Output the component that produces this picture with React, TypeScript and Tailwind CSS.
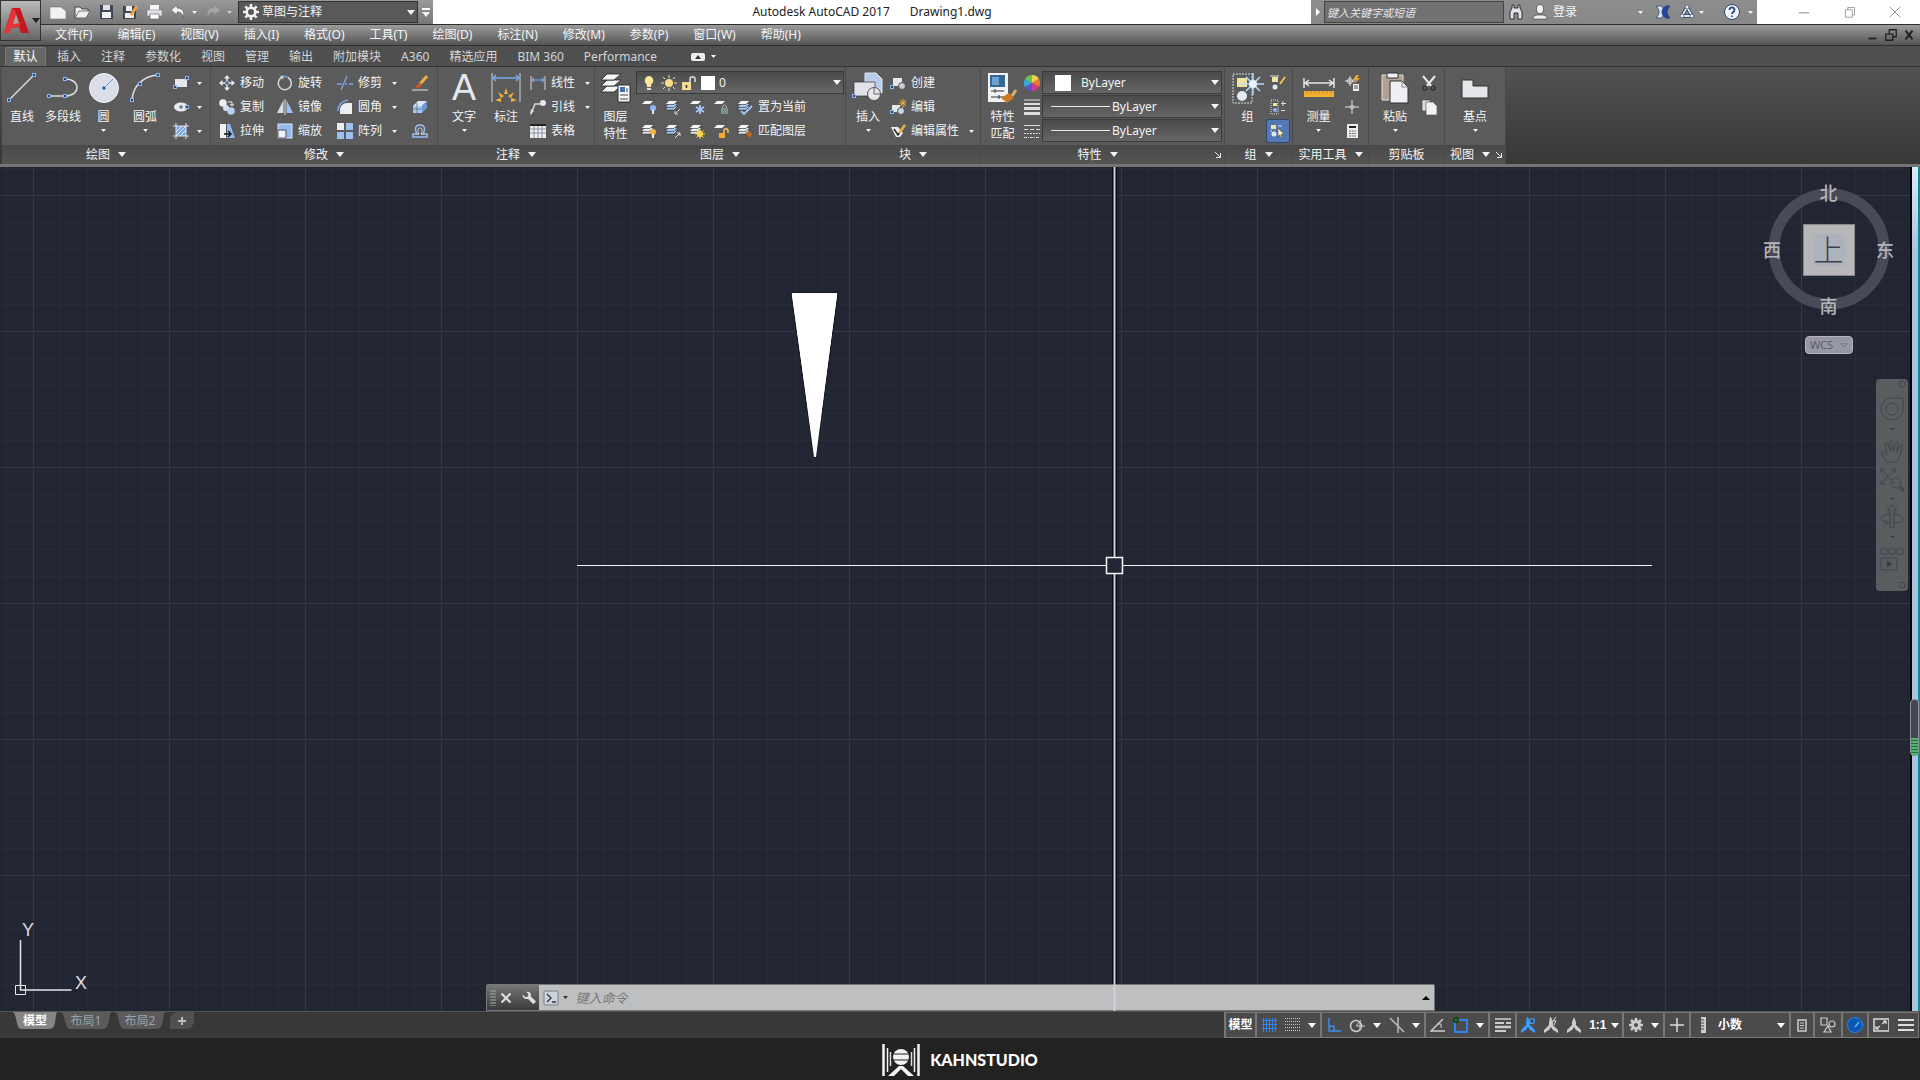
import { type ReactNode } from "react"

type IconProps = { children: ReactNode; size?: string; box?: string }

const Icon = ({ children, size = "size-4", box = "0 0 16 16" }: IconProps) => (
    <svg className={`${size} shrink-0`} viewBox={box} fill="none" aria-hidden="true">
        {children}
    </svg>
)

const Caret = ({ big = false }: { big?: boolean }) => (
    <svg className={big ? "w-2 h-[5px] shrink-0" : "w-[5px] h-[3px] shrink-0"} viewBox="0 0 8 5" preserveAspectRatio="none" aria-hidden="true">
        <path d="M0 0h8L4 5z" fill="currentColor" />
    </svg>
)

const Node = ({ x, y }: { x: number; y: number }) => (
    <rect x={x - 1.5} y={y - 1.5} width="3" height="3" fill="#33425f" stroke="#8ab6f5" />
)

// stack of sheets shared by the layer icons
const Sheets = ({ n = 3, blue = false }: { n?: number; blue?: boolean }) => (
    <g fill={blue ? "#a9c8f2" : "#e9ebf0"} stroke="#2c2c2c" strokeWidth=".6">
        {n > 2 && <path d="M4 7h9l-4 4H0z" />}
        {n > 1 && <path d="M4 4.500h9l-4 4H0z" />}
        <path d="M4 1.500h9l-4 4H0z" fill="#f4f5f7" />
    </g>
)

const icons: Record<string, ReactNode> = {
    line: <><path d="M3 28 28 3" stroke="#ddd" strokeWidth="1.500" /><Node x={3} y={28} /><Node x={28} y={3} /></>,
    polyline: <><path d="M2 24h16c16 0 16-17 0-17" stroke="#ddd" strokeWidth="1.500" /><Node x={2} y={24} /><Node x={18} y={24} /><Node x={18} y={7} /></>,
    circle: <><circle cx="16" cy="16" r="14.500" fill="#d9dde8" stroke="#f5f5f8" /><path d="m16 16 9-9" stroke="#6f9fe8" /><Node x={16} y={16} /></>,
    arc: <><path d="M3 28C4 14 14 4 29 3" stroke="#ddd" strokeWidth="1.500" /><Node x={3} y={28} /><Node x={11} y={12} /><Node x={29} y={3} /></>,
    rect: <><rect x="2" y="4" width="12" height="8" fill="#e6e8ee" /><Node x={2} y={12} /><Node x={14} y={3} /></>,
    ellipse: <><ellipse cx="8" cy="8" rx="7" ry="4.500" fill="#e6e8ee" /><path d="M8 6v4M6 8h4" stroke="#556" /><Node x={14} y={8} /></>,
    hatch: <><rect x="3" y="3" width="10" height="10" fill="#7da8e8" /><path d="M3 0v16M13 0v16M0 3h16M0 13h16" stroke="#dfe3ea" /><path d="m3 9 6-6M3 13 13 3M7 13l6-6" stroke="#dfe9fa" /></>,
    move: <><path d="m8 0 3 3.500H5zM8 16l3-3.500H5zM0 8l3.500-3v6zM16 8l-3.500-3v6z" fill="#e6e8ee" /><path d="M8 3v3M8 10v3M3 8h3M10 8h3" stroke="#e6e8ee" strokeWidth="1.500" /><circle cx="8" cy="8" r="2" stroke="#9cc0f5" /></>,
    rotate: <><path d="M11 2.500A6.500 6.500 0 1 1 5 2.300" stroke="#d5d8de" strokeWidth="1.500" /><path d="m3 1 4-.5-1 4z" fill="#d5d8de" /><path d="M6 2C7.500 1 9.500 1.500 11 2.500" stroke="#6f9fe8" strokeWidth="1.500" /></>,
    trim: <><path d="M0 9h5M8 9h2M12 9h4" stroke="#7ba7ec" strokeWidth="1.500" /><path d="m4 15 6-14" stroke="#7ba7ec" strokeWidth="1.300" /></>,
    brush: <><path d="m15 1-7 8" stroke="#f0b03c" strokeWidth="3" /><path d="M9 8c1 3-2 6-7 6 2-2 3-6 7-6z" fill="#c8581e" /><path d="M0 15h16" stroke="#e5e5e5" /></>,
    copy: <><circle cx="4" cy="4" r="3.800" fill="#eceef2" /><circle cx="7" cy="9" r="3" fill="#dbe2ee" /><circle cx="12" cy="12" r="3.800" fill="#b6d0f4" /><path d="M9 3h4v4m-2-2 2 2 2-2" stroke="#eee" /></>,
    mirror: <><path d="M6.500 1v13H0z" fill="#d9dce3" /><path d="M9.500 1v13H16z" fill="#9fc1ee" /><path d="M8 0v16" stroke="#ddd" /></>,
    fillet: <><path d="M3 15V11c0-4 3-7 7-7h5v11z" fill="#eceef2" /><path d="M1 12C1 6 5 2 11 1" stroke="#7ba7ec" strokeWidth="1.500" /></>,
    box3: <><path d="M1 7h9v7H1z" fill="#a8c7f0" /><path d="m1 7 5-5h9l-5 5z" fill="#dbe8fa" /><path d="m10 7 5-5v7l-5 5z" fill="#6f98d2" /><path d="M5 4v10M1 10h9" stroke="#5c6f8d" strokeWidth=".8" /></>,
    stretch: <><path d="M1 1h6v14H1z" fill="#f0f1f4" /><path d="M8 1h3l5 14H8z" fill="#8eb6ee" /><path d="M5 11h7m-3-3 3 3-3 3" stroke="#111" strokeWidth="1.400" /></>,
    scale: <><rect x="1" y="1" width="14" height="14" fill="#93b8ec" stroke="#dce7f8" /><rect x="1" y="7" width="8" height="8" fill="#f0f1f4" stroke="#556" /></>,
    array: <><path d="M0 0h7v7H0z" fill="#eceef2" /><path d="M9 0h7v7H9zM0 9h7v7H0zM9 9h7v7H9z" fill="#9cc0f2" /></>,
    offset: <><path d="M1 14h14v-3h-4c2-3 3-9-3-9S3 8 5 11H1z" stroke="#9cc0f5" strokeWidth="1.500" /><path d="M5 11h2C5 7 6 5 8 5s3 2 1 6h2" stroke="#d7dde8" /></>,
    dim: <><path d="M2 1v29M30 1v29" stroke="#d5d5d5" /><path d="M3 6h26M6 3 3 6l3 3M26 3l3 3-3 3" stroke="#78a9f0" strokeWidth="1.500" /><g fill="#f2b33c"><path d="m16 16 2 6h-4zM8 20l6 4-3 2zM24 20l-6 4 3 2zM5 28l6-2v4zM27 28l-6-2v4z" /></g></>,
    linear: <><path d="M1 1v14M15 1v14" stroke="#d5d5d5" /><path d="M2 5h12M4 3 2 5l2 2M12 3l2 2-2 2" stroke="#78a9f0" strokeWidth="1.200" /></>,
    leader: <><path d="M1 15 5 5h6" stroke="#d9d9d9" strokeWidth="1.500" /><path d="m0 16 1-6 3 2z" fill="#ddd" /><circle cx="13" cy="4" r="3" fill="#e6e8ee" /></>,
    table: <><rect x="0" y="1" width="16" height="14" fill="#eceef2" /><path d="M0 2h16" stroke="#222" strokeWidth="2" /><path d="M0 6h16M0 10h16M4 3v12M8 3v12M12 3v12" stroke="#8a92a5" /></>,
    layerBig: <><g fill="#f4f5f7" stroke="#222" strokeWidth=".8"><path d="M7 14h14l-7 6H1z" /><path d="M7 8h14l-7 6H1z" /><path d="M7 2h14l-7 6H1z" /></g><rect x="18" y="13" width="12" height="17" fill="#f4f5f7" stroke="#333" /><path d="M20 15h5v5h-5z" fill="#3f6fae" /><path d="M20 23h8M20 27h8M27 16v4" stroke="#444" /></>,
    bulb: <><path d="M8 1a4.500 4.500 0 0 0-2.500 8L6 12h4l.5-3A4.500 4.500 0 0 0 8 1z" fill="#fde79a" /><path d="M6 14h4" stroke="#ddd" strokeWidth="2" /></>,
    sun: <><circle cx="8" cy="8" r="4" fill="#f7d98a" /><path d="M8 0v3M8 13v3M0 8h3M13 8h3M2 2l2 2M12 12l2 2M14 2l-2 2M2 14l2-2" stroke="#f0e3c0" /></>,
    unlock: <><path d="M1 7h9v8H1z" fill="#f3dd93" /><path d="M9 7V4c0-3 5-3 5 0v3" stroke="#ddd" strokeWidth="1.500" /><path d="M5.500 10v3" stroke="#333" strokeWidth="1.500" /></>,
    lay1: <><Sheets n={1} /><circle cx="12" cy="9" r="3" fill="#8fb8f5" /><path d="M12 11v4" stroke="#dce7f8" strokeWidth="2" /></>,
    lay2: <><Sheets blue /><path d="m15 10-5 5m0-3v3h3" stroke="#c9cdd6" /></>,
    lay3: <><Sheets n={1} /><path d="M11 6v9M7 8l8 5M15 8l-8 5" stroke="#a9c9fa" strokeWidth="1.800" /></>,
    lay4: <><Sheets n={1} /><path d="M8 9h7v6H8z" fill="#76938f" /><path d="M9.500 9c0-4 4-4 4 0" stroke="#b7c3c2" /></>,
    lay5: <><Sheets blue /><path d="m4 12 3 3 8-8" stroke="#9cc0f5" strokeWidth="2" /></>,
    lay6: <><Sheets /><circle cx="12" cy="9" r="3" fill="#f5b43c" /><path d="M12 11v4" stroke="#eee" strokeWidth="2" /></>,
    lay7: <><Sheets blue /><path d="m10 15 5-5m0 3v-3h-3" stroke="#e5e8ee" /></>,
    lay8: <><Sheets /><circle cx="11" cy="11" r="3" fill="#ffe04a" /><path d="M11 6v10M6 11h10M7.500 7.500l7 7M14.500 7.500l-7 7" stroke="#ffd447" /></>,
    lay9: <><Sheets n={1} /><path d="M6 10h6v5H6z" fill="#f2a92e" /><path d="M11 10V8c0-3 4-3 4 0v2" stroke="#f2c25a" strokeWidth="1.500" /></>,
    lay10: <><Sheets /><path d="m8 10 5 5 2-4-3-3z" fill="#c26a25" /></>,
    insert: <><path d="M13 1h11l6 6v14H13z" fill="#b9cdec" stroke="#dfe8f6" /><path d="M2 10h21v14H2z" fill="#e1e3e9" stroke="#333" strokeWidth=".7" /><circle cx="22" cy="22" r="6.500" fill="#e6e7ea" stroke="#555" /><path d="M22 16v6h6" stroke="#666" /><Node x={2} y={24} /></>,
    create: <><path d="M3 3h9v8H3z" fill="#e6e8ee" /><circle cx="12" cy="11" r="3.500" fill="#c9ccd3" stroke="#555" /><Node x={2} y={12} /></>,
    edit: <><path d="M2 6h8v7H2z" fill="#e6e8ee" /><circle cx="11" cy="12" r="3.500" fill="#c3d4ee" stroke="#555" /><path d="M13 0v9M9 4h7M10 1l6 6M16 1l-6 6" stroke="#f0b03c" /><Node x={2} y={13} /></>,
    attr: <><path d="M1 4h7l5 6-3 4H6z" fill="#eceef2" /><path d="m4 6 4 6 2-3" stroke="#222" strokeWidth="1.500" /><path d="m15 2-6 8" stroke="#f0b03c" strokeWidth="2.500" /></>,
    match: <><path d="M1 1h20v29H1z" fill="#f1f2f4" /><path d="M3 3h15v12H3z" fill="#356795" /><path d="M5 5h7v8H5z" fill="#6ca3d4" /><path d="M4 19h13M8 17v4M4 25h13M12 23v4" stroke="#333" /><path d="M29 18l-4 6" stroke="#d9b27a" strokeWidth="3" /><path d="m14 26 8-5 5 5-7 5z" fill="#c97a28" /></>,
    wheel: <><path d="M8 8V0a8 8 0 0 1 7 4z" fill="#f3d04b" /><path d="M8 8l7-4a8 8 0 0 1 0 8z" fill="#e8792f" /><path d="M8 8l7 4a8 8 0 0 1-7 4z" fill="#d1388a" /><path d="M8 8v8a8 8 0 0 1-7-4z" fill="#5b55c8" /><path d="M8 8l-7 4a8 8 0 0 1 0-8z" fill="#39a7d8" /><path d="M8 8 1 4a8 8 0 0 1 7-4z" fill="#6ac250" /></>,
    weights: <><path d="M0 1h16" stroke="#ddd" /><path d="M0 5h16" stroke="#ddd" strokeWidth="2" /><path d="M0 9.500h16M0 14.500h16" stroke="#ddd" strokeWidth="3" /></>,
    types: <><path d="M0 2.500h16" stroke="#ddd" /><path d="M0 6.500h16" stroke="#ddd" strokeDasharray="4 2" /><path d="M0 10.500h16" stroke="#ddd" strokeDasharray="2 1" /><path d="M0 14.500h16" stroke="#ddd" strokeDasharray="3 1 1 1" /></>,
    group: <><rect x="1" y="2" width="19" height="29" stroke="#ddd" strokeDasharray="2 1" /><path d="M5 6h10v9H5z" fill="#eee3a0" /><circle cx="10" cy="24" r="5" fill="#e3eaf3" /><path d="M21 1v22M10 12h22M14 5l14 14M28 5 14 19" stroke="#b5dcff" strokeWidth="1.500" /><circle cx="21" cy="12" r="4" fill="#e6f5ff" /></>,
    groupEdit: <><path d="M2 2h6v5H2z" fill="#eee3a0" /><path d="M0 1h9" stroke="#ddd" /><circle cx="5" cy="12" r="2.500" fill="#e3eaf3" /><path d="m15 2-5 7" stroke="#f0c050" strokeWidth="2" /></>,
    groupAdd: <><path d="M1 1h7v14H1z" stroke="#ddd" strokeDasharray="1 1" /><path d="M3 4h4v3H3z" fill="#eee3a0" /><circle cx="5" cy="11" r="2" fill="#8ab6f5" /><path d="M13 2v5M11 4.500h5M11 11.500h4" stroke="#ddd" /></>,
    groupSel: <><path d="M1 2h5v4H1z" fill="#eee3a0" /><circle cx="4" cy="11" r="2.500" fill="#dfe7f2" /><path d="M1 9V7M8 3h4" stroke="#dde" /><path d="m8 5 6 6-3 .5 1.500 3-1.500.5-1.300-3L8 14z" fill="#f5eeb8" stroke="#333" strokeWidth=".5" /></>,
    measure: <><path d="M1 6v10M31 6v10M2 11h28M6 8l-4 3 4 3M26 8l4 3-4 3" stroke="#e5e5e5" strokeWidth="1.500" /><path d="M1 19h30v6H1z" fill="#f2b02e" /><path d="M4 19v3M8 19v3M12 19v3M16 19v3M20 19v3M24 19v3M28 19v3" stroke="#c08a24" /></>,
    quickSel: <><path d="M6 1v10M1 6h10" stroke="#e5e5e5" /><circle cx="6" cy="6" r="2.500" stroke="#e5e5e5" /><path d="m12 0-3 5h3l-2 4 6-6h-3l2-3z" fill="#f2a92e" /><path d="M9 9h6v7H9z" fill="#eee" /><path d="M10 11h4M10 13h4" stroke="#555" /></>,
    point: <><path d="M8 1v14M1 8h14" stroke="#e5e5e5" /><circle cx="8" cy="8" r="2" stroke="#bbb" /></>,
    calc: <><path d="M3 1h11v14H3z" fill="#eceef2" /><path d="M5 4h7" stroke="#222" strokeWidth="2" /><path d="M5 8h7M5 10.500h7M5 13h7" stroke="#666" strokeDasharray="2 .7" strokeWidth="1.200" /></>,
    paste: <><path d="M3 3h21v25H3z" fill="#b0a391" stroke="#ddd" /><path d="M8 1h11v5H8z" fill="#eef0f4" stroke="#333" /><path d="M11 9h12l6 6v16H11z" fill="#edeff3" stroke="#333" /><path d="M23 9v6h6" stroke="#888" /></>,
    cut: <><path d="m2 1 9 11M14 1 5 12" stroke="#e8e8e8" strokeWidth="2" /><circle cx="4" cy="13" r="2" stroke="#333" strokeWidth="1.500" /><circle cx="12" cy="13" r="2" stroke="#333" strokeWidth="1.500" /></>,
    clip: <><path d="M1 1h8v11H1z" fill="#d9dbe0" stroke="#444" strokeWidth=".6" /><path d="M5 3h7l4 4v9H5z" fill="#f1f2f4" stroke="#444" strokeWidth=".6" /></>,
    base: <path d="M3 8h11v6h15v12H3z" fill="#e4e6ea" stroke="#333" />,
    fileNew: <path d="M0 3h11l5 4v8H0z" fill="#f2f2f4" stroke="#777" strokeWidth=".6" />,
    open: <><path d="M1 14V3h5l2 2h6v2" fill="#eee" stroke="#444" /><path d="m1 14 4-7h11l-4 7z" fill="#eceef2" stroke="#444" strokeWidth=".7" /></>,
    save: <><path d="M2 1h13v14H2z" fill="#3f4757" /><path d="M5 1h7v5H5z" fill="#dfe2e8" /><path d="M4 8h9v6H4z" fill="#f2f2f4" /></>,
    saveAs: <><path d="M1 2h13v13H1z" fill="#3f4757" /><path d="M4 2h6v5H4zM3 9h9v5H3z" fill="#eceef2" /><path d="m15 2-6 9" stroke="#f0a63c" strokeWidth="3" /></>,
    print: <><path d="M4 1h9v5H4z" fill="#f5f5f5" /><path d="M1 6h15v6H1z" fill="#dfe2e8" stroke="#777" strokeWidth=".5" /><path d="M4 10h9v5H4z" fill="#fff" stroke="#555" strokeWidth=".6" /></>,
    undo: <path d="M7 1 1 6l6 5V8c4 0 6 2 6 6 2-6 0-10-6-10z" fill="#f2f2f4" stroke="#555" strokeWidth=".6" />,
    redo: <path d="m9 1 6 5-6 5V8c-4 0-6 2-6 6C1 8 3 4 9 4z" fill="#a8a8a8" stroke="#8a8a8a" strokeWidth=".6" />,
    gear: <><circle cx="8" cy="8" r="4.300" stroke="#f2f2f2" strokeWidth="2.600" /><path d="M8 0v3M8 13v3M0 8h3M13 8h3M2.300 2.300l2 2M11.700 11.700l2 2M13.700 2.300l-2 2M2.300 13.700l2-2" stroke="#f2f2f2" strokeWidth="2.500" /></>,
    binoculars: <path d="M4 1h2v3h4V1h2v3l2 4v7h-4V9H6v6H2V8l2-4z" fill="#e3e4e8" stroke="#2f3338" />,
    user: <><ellipse cx="8" cy="5" rx="3.500" ry="4.500" fill="#eef1f6" stroke="#333" strokeWidth=".6" /><path d="M1 15c0-3 3-4 5-4h4c2 0 5 1 5 4z" fill="#eef1f6" stroke="#333" strokeWidth=".6" /></>,
    exchange: <><path d="M1 2h5c2 1 3 3 3 6s-1 5-3 6H1c2-2 3-4 3-6S3 4 1 2z" fill="#dbe4f6" stroke="#2c4474" strokeWidth=".8" /><path d="M15 2h-4C9 3 7 5 7 8s2 5 4 6h4c-2-2-3-4-3-6s1-4 3-6z" fill="#2446a0" stroke="#1d356f" strokeWidth=".8" /></>,
    a360: <><path d="m8 3 5 9H3z" stroke="#2a3a5a" strokeWidth="3.500" strokeLinejoin="round" /><path d="m8 3 5 9H3z" stroke="#e3e8f2" strokeWidth="1.800" /><g fill="#e3e8f2" stroke="#2a3a5a" strokeWidth=".6"><circle cx="8" cy="3" r="2" /><circle cx="3" cy="12" r="2" /><circle cx="13" cy="12" r="2" /></g></>,
    help: <><circle cx="8" cy="8" r="7.500" fill="#f2f5fa" stroke="#2c4474" /><path d="M5.500 6c0-3.500 5-3.500 5 0 0 2-2.500 2-2.500 4M8 11.500V13" stroke="#28488f" strokeWidth="1.800" /></>,
    grid: <path d="M2.500 1v14M5.500 1v14M8.500 1v14M11.500 1v14M14.500 1v14M1 3.500h15M1 7.500h15M1 11.500h15" stroke="#2f86f2" />,
    dots: <path d="M1 1.500h15M1 4.500h15M1 7.500h15M1 10.500h15M1 13.500h15" stroke="#c4c4c4" strokeDasharray="1 1" />,
    ortho: <path d="M3 1v13h12M3 9h5v5" stroke="#3b8df0" strokeWidth="1.500" />,
    polar: <><circle cx="7" cy="9" r="5.500" stroke="#ccc" strokeWidth="1.500" /><path d="M7 9h9M11 5v8M7 9l5-6" stroke="#ccc" /></>,
    iso: <path d="M9 0v16M1 1l14 14" stroke="#bbb" strokeWidth="1.500" />,
    angle: <><path d="M15 14H1L13 2" stroke="#ccc" strokeWidth="1.500" /><path d="M7 7h4v4" stroke="#ccc" /></>,
    osnap: <><rect x="2" y="3" width="12" height="12" stroke="#2d8cff" strokeWidth="1.800" /><circle cx="3" cy="3" r="2.500" fill="#1f6b22" stroke="#0c2c0d" /></>,
    lineweight: <><path d="M0 2h16" stroke="#ccc" strokeWidth="1.500" /><path d="M0 6h9M11 6h5M0 14h11" stroke="#ccc" strokeWidth="2" /><path d="M0 10h16" stroke="#ccc" strokeWidth="2.500" /></>,
    anno: <><path d="M7 0 6 5v3l-5 5v3l5-3 2-3 2 3 5 3v-3l-5-5V5L8 0z" fill="#3b9dff" /><circle cx="12" cy="4" r="2.500" stroke="#3b9dff" strokeWidth="1.200" /></>,
    anno2: <><path d="M7 0 6 5v3l-5 5v3l5-3 2-3 2 3 5 3v-3l-5-5V5L8 0z" fill="#ccc" /><path d="m13 0-3 4h3l-2 4" stroke="#ddd" /></>,
    anno3: <path d="M8 0 6 5v3l-5 5v3l5-3 2-3 2 3 5 3v-3l-5-5V5z" fill="#ccc" />,
    cog: <><circle cx="8" cy="8" r="3.500" stroke="#ccc" strokeWidth="3" /><path d="M8 1v3M8 12v3M1 8h3M12 8h3M3 3l2 2M11 11l2 2M13 3l-2 2M3 13l2-2" stroke="#ccc" strokeWidth="2.500" /></>,
    plus: <path d="M8 1v14M1 8h14" stroke="#ddd" strokeWidth="1.500" />,
    ruler: <><path d="M6 0h5v16H6z" fill="#ccc" /><path d="M6 3h3M6 6h3M6 9h3M6 12h3" stroke="#444" /></>,
    quickProps: <><rect x="4" y="3" width="8" height="11" stroke="#ccc" strokeWidth="1.500" /><path d="M6 6h4M6 8.500h4M6 11h4" stroke="#ccc" /></>,
    isolate: <><path d="M1 1h6v7H1zM8 9l3 6H4z" stroke="#ccc" strokeWidth="1.200" /><circle cx="12" cy="7" r="3" stroke="#ccc" strokeWidth="1.200" /></>,
    accel: <><circle cx="8" cy="8" r="7.500" fill="#0b56ae" stroke="#1c86f5" /><path d="m8 10 4-5" stroke="#5fb3ff" strokeWidth="1.500" /></>,
    clean: <><rect x="1" y="2" width="15" height="12" stroke="#ddd" strokeWidth="1.500" /><path d="M9 7l4-3m-3 0h3v3M7 9l-4 3m0-3v3h3" stroke="#ddd" strokeWidth="1.200" /></>,
    menu: <path d="M0 3h16M0 8h16M0 13h16" stroke="#ddd" strokeWidth="2" />,
}

const Glyph = ({ name }: { name: string }) => <Icon>{icons[name]}</Icon>

const BigButton = ({ icon, label, caret = false, width = "w-10" }: { icon: string; label: ReactNode; caret?: boolean; width?: string }) => (
    <button type="button" className={`${width} flex shrink-0 flex-col items-center pt-px leading-[17px]`}>
        {icon === "text" ? (
            <span className="h-8 font-['Liberation_Sans'] text-4xl leading-8 text-gray-200">A</span>
        ) : (
            <Icon size="size-8" box="0 0 32 32">{icons[icon]}</Icon>
        )}
        <span className="mt-1 whitespace-nowrap">{label}</span>
        {caret && <span className="mt-1"><Caret /></span>}
    </button>
)

type SmallProps = { icon: string; label?: string; caret?: boolean; title?: string; active?: boolean }

const SmallButton = ({ icon, label, caret, title, active }: SmallProps) => (
    <button type="button" aria-label={title} className={`flex h-6 shrink-0 items-center whitespace-nowrap ${active ? "-mx-1 rounded-xs border border-[#33496f] bg-[#5478b3] px-[3px]" : ""}`}>
        <Glyph name={icon} />
        {label && <span className="ml-[5px]">{label}</span>}
        {caret && <span className={label ? "ml-2.5" : "ml-2"}><Caret /></span>}
    </button>
)

const Column = ({ items, className = "" }: { items: SmallProps[]; className?: string }) => (
    <div className={`flex shrink-0 flex-col items-start ${className}`}>
        {items.map((item) => <SmallButton key={item.icon} {...item} />)}
    </div>
)

type PanelProps = { title: string; width: string; caret?: boolean; launcher?: boolean; children: ReactNode }

const Panel = ({ title, width, caret = true, launcher = false, children }: PanelProps) => (
    <section className={`${width} flex shrink-0 flex-col border-r border-[#4a4a4a] bg-[#5b5b5b]`}>
        <div className="flex h-[78px] pt-1">{children}</div>
        <div className={`relative flex h-[19px] items-center justify-center gap-2 bg-linear-to-b from-[#484848] to-[#555] ${launcher ? "pr-2.5" : ""}`}>
            <span className="whitespace-nowrap">{title}</span>
            {caret && <Caret big />}
            {launcher && (
                <span className="absolute right-0.5">
                    <Icon size="size-2" box="0 0 8 8"><path d="m1 1 5 5M6.500 2v4.500H2" stroke="#eee" /></Icon>
                </span>
            )}
        </div>
    </section>
)

const comboBox = "relative flex items-center border border-[#3a3a3a] bg-linear-to-b from-[#4b4b4b] to-[#666]"

const PropertyCombo = ({ label, swatch = false }: { label: string; swatch?: boolean }) => (
    <div className={`${comboBox} h-[23px] w-[180px]`}>
        {swatch ? <span className="ml-3 size-4 shrink-0 bg-white" /> : <span className="ml-2 h-px w-[59px] shrink-0 bg-gray-200" />}
        <select aria-label={label} className={`min-w-0 flex-1 appearance-none font-['Noto_Sans'] outline-none ${swatch ? "pl-2.5" : "pl-0.5"}`}>
            <option>ByLayer</option>
        </select>
        <span className="pointer-events-none absolute right-0.5 flex"><Caret big /></span>
    </div>
)

const TitleBar = () => (
    <div className="flex h-6 justify-between bg-white">
        <div className="flex w-[433px] shrink-0 items-center bg-linear-to-b from-[#999] to-[#777] pl-[50px]">
            <div className="flex w-[188px] items-center gap-2">
                {["fileNew", "open", "save", "saveAs", "print", "undo"].map((name) => (
                    <button key={name} type="button" aria-label={name}><Glyph name={name} /></button>
                ))}
                <span className="-ml-0.5"><Caret /></span>
                <button type="button" aria-label="redo"><Glyph name="redo" /></button>
                <span className="-ml-0.5 text-[#ccc]"><Caret /></span>
            </div>
            <div className="relative flex h-[22px] w-[180px] items-center border border-[#333] bg-[#595959] pl-1">
                <Glyph name="gear" />
                <select aria-label="工作空间" className="flex-1 appearance-none pl-[3px] outline-none"><option>草图与注释</option></select>
                <span className="pointer-events-none absolute right-0.5 flex"><Caret big /></span>
            </div>
            <button type="button" aria-label="自定义" className="flex h-full flex-1 flex-col items-center justify-center gap-0.5">
                <span className="h-0.5 w-2 bg-white" />
                <Caret big />
            </button>
        </div>
        <h1 className="flex gap-5 self-center font-['Noto_Sans'] leading-5 whitespace-nowrap text-[#222]">
            <span>Autodesk AutoCAD 2017</span>
            <span>Drawing1.dwg</span>
        </h1>
        <div className="flex shrink-0">
            <div className="flex w-[446px] items-center bg-linear-to-b from-[#8d8d8d] to-[#888]">
                <span className="flex w-[13px] justify-center">
                    <Icon size="h-2 w-1.5" box="0 0 6 8"><path d="M1 0v8l4-4z" fill="#fff" /></Icon>
                </span>
                <input aria-label="搜索" placeholder="键入关键字或短语" className="h-[22px] w-[180px] border border-[#444] bg-[#717171] pl-0.5 text-[11px] italic outline-none placeholder:text-gray-200" />
                <button type="button" aria-label="查找" className="ml-1"><Glyph name="binoculars" /></button>
                <button type="button" className="ml-2 flex items-center gap-[5px]"><Glyph name="user" />登录</button>
                <span className="ml-[61px]"><Caret /></span>
                <button type="button" aria-label="Exchange" className="ml-3"><Glyph name="exchange" /></button>
                <button type="button" aria-label="A360" className="ml-2"><Glyph name="a360" /></button>
                <span className="ml-1"><Caret /></span>
                <button type="button" aria-label="帮助" className="ml-5"><Glyph name="help" /></button>
                <span className="ml-2"><Caret /></span>
            </div>
            <div className="flex w-[163px] items-center justify-between pr-[18px] pl-10">
                <button type="button" aria-label="最小化"><Icon size="size-3.5"><path d="M2 9h12" stroke="#777" /></Icon></button>
                <button type="button" aria-label="还原"><Icon size="size-3"><path d="M2 5h9v10H2zM5 5V2h9v10h-3" stroke="#888" /></Icon></button>
                <button type="button" aria-label="关闭"><Icon size="size-3.5"><path d="m2 2 12 12M14 2 2 14" stroke="#888" /></Icon></button>
            </div>
        </div>
    </div>
)

const menus = ["文件(F)", "编辑(E)", "视图(V)", "插入(I)", "格式(O)", "工具(T)", "绘图(D)", "标注(N)", "修改(M)", "参数(P)", "窗口(W)", "帮助(H)"]

const MenuBar = () => (
    <nav className="flex h-[22px] items-center border-y border-[#2e2e2e] bg-linear-to-b from-[#9c9c9c] to-[#555] pr-1 pl-[55px]">
        <div className="flex flex-1 gap-[25px]">
            {menus.map((menu) => <button key={menu} type="button" className="whitespace-nowrap">{menu}</button>)}
        </div>
        <div className="flex gap-1 text-[#222]">
            <Icon size="size-3.5"><path d="M3 12h9" stroke="currentColor" strokeWidth="2" /></Icon>
            <Icon size="size-3.5"><path d="M2 7h8v7H2zM6 7V2h8v8h-4" stroke="currentColor" strokeWidth="1.500" /></Icon>
            <Icon size="size-3.5"><path d="m4 3 8 10M12 3 4 13" stroke="currentColor" strokeWidth="2.500" /></Icon>
        </div>
    </nav>
)

const tabs = ["插入", "注释", "参数化", "视图", "管理", "输出", "附加模块", "A360", "精选应用", "BIM 360", "Performance"]

const RibbonTabs = () => (
    <div className="flex h-[21px] items-center gap-5 border-b border-[#333] bg-[#4f4f4f] pt-px pl-[5px] text-gray-300">
        <button type="button" className="-mr-[9px] h-[19px] w-[41px] self-end rounded-t-xs border border-b-0 border-[#777] bg-[#666] text-white">默认</button>
        {tabs.map((tab) => <button key={tab} type="button" className="whitespace-nowrap">{tab}</button>)}
        <button type="button" aria-label="最小化功能区" className="ml-3.5 flex items-center gap-1.5 text-white">
            <Icon size="h-2 w-3.5" box="0 0 14 8"><rect width="14" height="8" rx="2" fill="#eee" /><path d="m7 2 3 4H4z" fill="#333" /></Icon>
            <Caret />
        </button>
    </div>
)

const Ribbon = () => (
    <div className="flex border-b-[3px] border-[#757575] bg-linear-to-b from-[#525252] to-[#383838] pl-0.5">
        <Panel title="绘图" width="w-[209px]">
            <BigButton icon="line" label="直线" />
            <BigButton icon="polyline" label="多段线" width="w-[42px]" />
            <BigButton icon="circle" label="圆" caret width="w-[39px]" />
            <BigButton icon="arc" label="圆弧" caret width="w-11" />
            <Column className="ml-1.5" items={[{ icon: "rect", caret: true, title: "矩形" }, { icon: "ellipse", caret: true, title: "椭圆" }, { icon: "hatch", caret: true, title: "图案填充" }]} />
        </Panel>
        <Panel title="修改" width="w-[227px]">
            <Column className="ml-2 w-[58px]" items={[{ icon: "move", label: "移动" }, { icon: "copy", label: "复制" }, { icon: "stretch", label: "拉伸" }]} />
            <Column className="w-[60px]" items={[{ icon: "rotate", label: "旋转" }, { icon: "mirror", label: "镜像" }, { icon: "scale", label: "缩放" }]} />
            <Column className="w-[75px]" items={[{ icon: "trim", label: "修剪", caret: true }, { icon: "fillet", label: "圆角", caret: true }, { icon: "array", label: "阵列", caret: true }]} />
            <Column items={[{ icon: "brush", title: "删除" }, { icon: "box3", title: "分解" }, { icon: "offset", title: "偏移" }]} />
        </Panel>
        <Panel title="注释" width="w-[157px]">
            <BigButton icon="text" label="文字" caret width="w-[52px]" />
            <BigButton icon="dim" label="标注" width="w-8" />
            <Column className="ml-2" items={[{ icon: "linear", label: "线性", caret: true }, { icon: "leader", label: "引线", caret: true }, { icon: "table", label: "表格" }]} />
        </Panel>
        <Panel title="图层" width="w-[251px]">
            <BigButton icon="layerBig" label={<>图层<br />特性</>} width="w-[41px]" />
            <div className="flex flex-col">
                <div className={`${comboBox} h-[23px] w-[208px] gap-1 pl-1`}>
                    <Glyph name="bulb" />
                    <Glyph name="sun" />
                    <Glyph name="unlock" />
                    <span className="size-3.5 bg-white" />
                    <select aria-label="图层" className="flex-1 appearance-none outline-none"><option>0</option></select>
                    <span className="pointer-events-none absolute right-0.5 flex"><Caret big /></span>
                </div>
                <div className="mt-px flex gap-2 pl-[5px]">
                    {["lay1", "lay2", "lay3", "lay4"].map((name) => <SmallButton key={name} icon={name} title={name} />)}
                    <SmallButton icon="lay5" label="置为当前" />
                </div>
                <div className="flex gap-2 pl-[5px]">
                    {["lay6", "lay7", "lay8", "lay9"].map((name) => <SmallButton key={name} icon={name} title={name} />)}
                    <SmallButton icon="lay10" label="匹配图层" />
                </div>
            </div>
        </Panel>
        <Panel title="块" width="w-[135px]">
            <BigButton icon="insert" label="插入" caret width="w-11" />
            <Column items={[{ icon: "create", label: "创建" }, { icon: "edit", label: "编辑" }, { icon: "attr", label: "编辑属性", caret: true }]} />
        </Panel>
        <Panel title="特性" width="w-[244px]" launcher>
            <BigButton icon="match" label={<>特性<br />匹配</>} width="w-[43px]" />
            <Column items={[{ icon: "wheel", title: "颜色" }, { icon: "weights", title: "线宽" }, { icon: "types", title: "线型" }]} />
            <div className="ml-0.5 flex flex-col gap-px">
                <PropertyCombo label="对象颜色" swatch />
                <PropertyCombo label="线宽" />
                <PropertyCombo label="线型" />
            </div>
        </Panel>
        <Panel title="组" width="w-[68px]">
            <BigButton icon="group" label="组" width="w-[45px]" />
            <Column items={[{ icon: "groupEdit", title: "组编辑" }, { icon: "groupAdd", title: "解除编组" }, { icon: "groupSel", title: "组选择", active: true }]} />
        </Panel>
        <Panel title="实用工具" width="w-[76px]">
            <BigButton icon="measure" label="测量" caret width="w-[51px]" />
            <Column items={[{ icon: "quickSel", title: "快速选择" }, { icon: "point", title: "点" }, { icon: "calc", title: "计算器" }]} />
        </Panel>
        <Panel title="剪贴板" width="w-[76px]" caret={false}>
            <BigButton icon="paste" label="粘贴" caret width="w-[52px]" />
            <Column items={[{ icon: "cut", title: "剪切" }, { icon: "clip", title: "复制" }]} />
        </Panel>
        <Panel title="视图" width="w-[61px]" launcher>
            <BigButton icon="base" label="基点" caret width="w-[60px]" />
        </Panel>
    </div>
)

const ViewCube = () => (
    <div className="absolute top-[17px] right-[26px] grid h-[131px] w-[131px] grid-cols-[18px_1fr_18px] grid-rows-[18px_1fr_18px] items-center justify-items-center text-lg leading-none font-medium text-[#b4b5ba]">
        <svg className="absolute top-px left-0.5 size-[128px]" viewBox="0 0 128 128" fill="none" aria-hidden="true">
            <circle cx="64" cy="64" r="55" stroke="#484b57" strokeWidth="11" />
        </svg>
        <span className="relative col-start-2">北</span>
        <span className="relative row-start-2">西</span>
        <button type="button" className="relative row-start-2 size-[52px] border border-[#888] bg-[#b7b7b9] p-[9px]">
            <span className="flex size-8 items-center justify-center bg-[#aeb2bc] text-3xl leading-none font-light text-[#3d414b]">上</span>
        </button>
        <span className="relative row-start-2">东</span>
        <span className="relative col-start-2 row-start-3">南</span>
    </div>
)

const NavBar = () => (
    <div className="absolute top-[212px] right-3 flex h-[212px] w-8 flex-col items-center rounded-sm bg-[#595d60] text-[#3b3e44]">
        <svg className="h-full w-8" viewBox="0 0 32 212" fill="none" stroke="#41454c" aria-hidden="true">
            <circle cx="26" cy="5" r="3" />
            <circle cx="26" cy="206" r="3" />
            <path d="M16 19h11v11a11 11 0 1 1-11-11z" />
            <circle cx="16" cy="30" r="6" />
            <path d="M14 49h5l-2.500 2zM14 119h5l-2.500 2zM14 157h5l-2.500 2z" fill="#33363c" stroke="none" />
            <path d="M11 83C8 79 6 76 5 73c2-2 4 0 6 3l-2-11c0-2 2-2 3 0l2 7V63c0-2 3-2 3 0v9l3-8c1-2 3-1 2 1l-1 8 3-6c1-2 3-1 2 1-1 5-2 11-5 15z" />
            <path d="m5 90 14 15M19 90 5 105M5 94v-4h4M15 90h4v4M5 101v4h4" />
            <circle cx="20" cy="104" r="5" />
            <path d="m24 108 4 4" strokeWidth="3" />
            <path d="M14 148v-17h-3l5-5 5 5h-3v17zM14 135c-12 1-12 9 0 9m4 0c12 0 12-8 0-9M8 141l4 3-4 3" />
            <path d="M5 170h6v5H5zM13 170h6v5h-6zM21 170h6v5h-6zM5 179h16v12H5z" />
            <path d="M11 182v6l5-3z" fill="#33363c" />
        </svg>
    </div>
)

const CommandLine = () => (
    <form className="absolute inset-x-0 bottom-0 mx-auto flex h-[27px] w-[949px] rounded-t-xs border border-[#777]">
        <div className="flex w-[52px] items-center gap-2 bg-linear-to-b from-[#777] to-[#393a3c] pl-[3px]">
            <Icon size="h-4 w-1.5" box="0 0 6 16"><path d="M1 0v16M3 0v16M5 0v16" stroke="#aaa" strokeDasharray="2 1" /></Icon>
            <button type="button" aria-label="关闭" className="-ml-1"><Icon size="size-3"><path d="m2 2 12 12M14 2 2 14" stroke="#ddd" strokeWidth="3" /></Icon></button>
            <button type="button" aria-label="自定义" className="ml-0.5"><Icon size="size-3.5"><path d="M5 1c4-1 6 2 5 5l6 6-3 3-6-6C3 10 0 7 1 4l3 3 3-1V3z" fill="#ddd" /></Icon></button>
        </div>
        <div className="flex flex-1 items-center bg-[#bebfc1] px-1 text-[#333]">
            <Icon><rect x="1" y="1" width="14" height="14" rx="1" fill="#cdd3dd" stroke="#7a8088" /><path d="m4 4 4 4-4 4M9 12h4" stroke="#333" strokeWidth="1.300" /></Icon>
            <span className="mx-1"><Caret /></span>
            <input aria-label="命令" placeholder="键入命令" className="flex-1 pl-1 text-[13px] italic outline-none placeholder:text-[#777]" />
            <Icon size="h-1 w-2" box="0 0 8 4"><path d="M0 4h8L4 0z" fill="#000" /></Icon>
        </div>
    </form>
)

const Canvas = () => (
    <main className="relative min-h-[600px] flex-1 overflow-hidden bg-[#222632]">
        <svg className="absolute inset-0 size-full" fill="none" aria-hidden="true">
            <defs>
                <pattern id="grid" x="33" y="28" width="136" height="136" patternUnits="userSpaceOnUse">
                    <path d="M27.500 0v136M54.500 0v136M82.500 0v136M109.500 0v136M0 27.500h136M0 54.500h136M0 82.500h136M0 109.500h136" stroke="#282c38" />
                    <path d="M.5 0v136M0 .5h136" stroke="#333743" />
                </pattern>
            </defs>
            <rect width="100%" height="100%" fill="url(#grid)" />
            <path d="M791 126h47l-22 164h-2z" fill="#fff" stroke="#0b0d1a" />
            <path d="M792 126h45l-21 164h-2z" fill="#fff" />
            <g stroke="#e6e6ea">
                <path d="M20.500 773v50h51" strokeWidth="1.500" />
                <path d="M15.500 818.500h10v9h-10z" />
            </g>
            <g fill="#dcdde2" fontFamily="Liberation Sans, sans-serif" fontSize="18">
                <text x="22" y="769">Y</text>
                <text x="75" y="822">X</text>
            </g>
            <path d="M1114.500 0v391M1114.500 407v460" stroke="#070810" strokeWidth="5" />
        </svg>
        <ViewCube />
        <button type="button" className="absolute top-[169px] right-[67px] flex h-[18px] w-12 items-center justify-between rounded-sm border border-[#b5b5c2] bg-[#9797a6] px-1 font-['Noto_Sans'] text-[11px] text-[#5b5b68]">
            WCS
            <Icon size="h-1 w-2" box="0 0 8 4"><path d="M0 0h8L4 4z" stroke="#777" /></Icon>
        </button>
        <NavBar />
        <CommandLine />
        <svg className="pointer-events-none absolute inset-0 size-full" fill="none" aria-hidden="true">
            <path d="M1114.500 0v391M1114.500 407v460" stroke="#d2d2d6" strokeWidth="2" />
            <path d="M577 398.500h529M1123 398.500h529" stroke="#f5f5f5" />
            <rect x="1106.500" y="390.500" width="16" height="16" stroke="#f5f5f5" strokeWidth="1.500" />
        </svg>
        <div className="absolute inset-y-0 right-0 flex w-2.5">
            <span className="w-0.5 bg-black" />
            <span className="flex-1 bg-linear-to-b from-[#dce9fa] to-[#a9c3e2] to-10%" />
            <span className="w-0.5 bg-[#11888f]" />
        </div>
        <div className="absolute top-[532px] right-px flex h-[57px] w-[9px] flex-col justify-end rounded-sm border border-[#8c93a5] bg-[#44464f]">
            <div className="h-[17px] bg-[repeating-linear-gradient(#49b766_0_2px,#2c6b40_2px_3px)]" />
        </div>
    </main>
)

const LayoutTab = ({ label, width, active = false }: { label: string; width: string; active?: boolean }) => (
    <button type="button" className={`${width} relative h-[17px] leading-[17px] ${active ? "font-bold text-white" : "text-gray-400"}`}>
        <svg className="absolute inset-0 size-full" viewBox="0 0 50 17" preserveAspectRatio="none" aria-hidden="true">
            <path d="M0 0c4 0 4 8 6 13 1 3 2 4 5 4h29c3 0 5-1 6-4 2-5 1-13 4-13z" fill={active ? "#858585" : "#5a5a5a"} />
        </svg>
        <span className="relative">{label}</span>
    </button>
)

const StatusGroup = ({ width, children }: { width: string; children: ReactNode }) => (
    <div className={`${width} flex h-full shrink-0 items-center justify-around border-r-2 border-[#777] last:border-r`}>{children}</div>
)

const StatusButton = ({ name }: { name: string }) => (
    <button type="button" aria-label={name} className="shrink-0"><Glyph name={name} /></button>
)

const StatusCaret = () => <span className="shrink-0"><Caret big /></span>

const StatusBar = () => (
    <div className="flex h-[27px] justify-between border-t border-[#555] bg-[#383838]">
        <div className="flex items-start gap-0.5 pl-3">
            <LayoutTab label="模型" width="w-[46px]" active />
            <LayoutTab label="布局1" width="w-[52px]" />
            <LayoutTab label="布局2" width="w-[52px]" />
            <button type="button" aria-label="新建布局" className="ml-0.5 flex h-[17px] w-6 items-center justify-center rounded-tl-lg rounded-br-lg bg-[#505050]">
                <Icon size="size-2.5" box="0 0 10 10"><path d="M5 1v8M1 5h8" stroke="#bbb" strokeWidth="2" /></Icon>
            </button>
        </div>
        <div className="mr-px flex border-y border-l-2 border-[#777] bg-[#4b4b4b] text-white">
            <StatusGroup width="w-[31px]"><button type="button" className="font-bold whitespace-nowrap">模型</button></StatusGroup>
            <StatusGroup width="w-[65px]"><StatusButton name="grid" /><StatusButton name="dots" /><StatusCaret /></StatusGroup>
            <StatusGroup width="w-[104px]"><StatusButton name="ortho" /><StatusButton name="polar" /><StatusCaret /><StatusButton name="iso" /><StatusCaret /></StatusGroup>
            <StatusGroup width="w-16"><StatusButton name="angle" /><StatusButton name="osnap" /><StatusCaret /></StatusGroup>
            <StatusGroup width="w-[27px]"><StatusButton name="lineweight" /></StatusGroup>
            <StatusGroup width="w-[107px]">
                <StatusButton name="anno" /><StatusButton name="anno2" /><StatusButton name="anno3" />
                <button type="button" className="flex items-center gap-1 font-['Liberation_Sans'] font-bold">1:1<Caret big /></button>
            </StatusGroup>
            <StatusGroup width="w-[41px]"><StatusButton name="cog" /><StatusCaret /></StatusGroup>
            <StatusGroup width="w-[26px]"><StatusButton name="plus" /></StatusGroup>
            <StatusGroup width="w-[100px]">
                <Glyph name="ruler" />
                <select aria-label="单位" className="w-[52px] appearance-none font-bold outline-none"><option>小数</option></select>
                <StatusCaret />
            </StatusGroup>
            <StatusGroup width="w-6"><StatusButton name="quickProps" /></StatusGroup>
            <StatusGroup width="w-7"><StatusButton name="isolate" /></StatusGroup>
            <StatusGroup width="w-[26px]"><StatusButton name="accel" /></StatusGroup>
            <StatusGroup width="w-[50px]"><StatusButton name="clean" /><StatusButton name="menu" /></StatusGroup>
        </div>
    </div>
)

const Footer = () => (
    <footer className="flex h-[42px] items-center justify-center gap-2.5 bg-[#222] pt-0.5">
        <Icon size="h-8 w-[38px]" box="0 0 38 32">
            <path d="M1.500 0v32M36.500 0v32" stroke="#f2f2f2" strokeWidth="2.500" />
            <path d="M5.500 4v24M32.500 4v24" stroke="#f2f2f2" strokeWidth="1.500" />
            <path d="M8.500 8v14M29.500 8v14" stroke="#ddd" strokeWidth="1.500" />
            <circle cx="19" cy="13" r="8" fill="#f2f2f2" />
            <path d="M9 10h20M9 16h20" stroke="#222" />
            <path d="M17 22h4l11 10h-6l-7-7-7 7H6z" fill="#f2f2f2" />
        </Icon>
        <span className="font-[Lato] text-base leading-5 font-black text-white">KAHNSTUDIO</span>
    </footer>
)

const App = () => (
    <div className="flex min-h-screen flex-col overflow-x-hidden bg-[#222] font-['Noto_Sans','Noto_Sans_CJK_SC',sans-serif] text-xs leading-4 text-gray-100">
        <header className="relative">
            <TitleBar />
            <MenuBar />
            <RibbonTabs />
            <Ribbon />
            <button type="button" aria-label="应用程序菜单" className="absolute top-0 left-0 flex h-[41px] w-[41px] items-center gap-px border border-[#333] bg-linear-to-b from-[#bbb] to-[#666] pl-0.5">
                <Icon size="h-8 w-7" box="0 0 28 32">
                    <path d="M1 28 9 3h8l9 25h-8l-2-6-8 1-2 5z" fill="#c4171f" />
                    <path d="m9 3 4 4-2 9 7 2-2 4-8 1-2 5H1z" fill="#e4343a" />
                    <path d="m13 9 3 9-6 1z" fill="#a8a8a8" />
                </Icon>
                <span className="text-[#222]"><Caret big /></span>
            </button>
        </header>
        <Canvas />
        <StatusBar />
        <Footer />
    </div>
)

export default App
